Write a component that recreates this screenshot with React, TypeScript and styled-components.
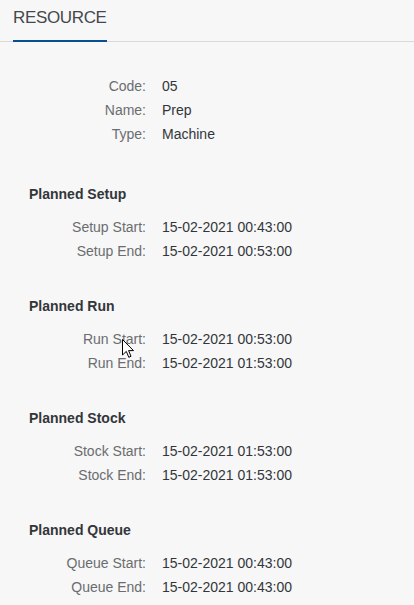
import React from "react";
import styled, { createGlobalStyle } from "styled-components";

const Global = createGlobalStyle`
  html, body { margin: 0; padding: 0; background: #f7f7f7; }
  body { font-family: "Liberation Sans", Arial, sans-serif; }
`;

const Page = styled.div`
  position: relative;
  width: 414px;
  min-height: 605px;
  background: #f7f7f7;
  overflow: hidden;
`;

const TabBar = styled.div`
  height: 41px;
  border-bottom: 1px solid #d9d9d9;
  padding-left: 13px;
  display: flex;
  align-items: flex-end;
`;

const Tab = styled.div`
  height: 41px;
  box-sizing: border-box;
  padding-top: 6px;
  font-size: 17px;
  letter-spacing: -0.35px;
  line-height: 22px;
  color: #45484c;
  border-bottom: 2px solid #0a4f92;
  margin-bottom: -1px;
  width: 94px;
  white-space: nowrap;
`;

const Content = styled.div`
  padding-top: 32px;
  display: flex;
  flex-direction: column;
`;

const Grid = styled.div`
  display: grid;
  grid-template-columns: 146px 1fr;
  column-gap: 16px;
`;

const Label = styled.div`
  text-align: right;
  font-size: 14px;
  line-height: 24px;
  color: #6a6d70;
  white-space: nowrap;
`;

const Value = styled.div`
  font-size: 14px;
  line-height: 24px;
  color: #32363a;
  white-space: nowrap;
`;

const Section = styled.section<{ $first?: boolean }>`
  margin-top: ${(p) => (p.$first ? 36 : 31)}px;
  display: flex;
  flex-direction: column;
  gap: 9px;
`;

const Heading = styled.h3`
  margin: 0;
  padding-left: 29px;
  font-size: 14px;
  line-height: 24px;
  font-weight: bold;
  color: #32363a;
`;

const Cursor = styled.svg`
  position: absolute;
  left: 122px;
  top: 339px;
  pointer-events: none;
`;

type Row = [string, string];

const info: Row[] = [
  ["Code:", "05"],
  ["Name:", "Prep"],
  ["Type:", "Machine"],
];

const sections: { title: string; rows: Row[] }[] = [
  {
    title: "Planned Setup",
    rows: [
      ["Setup Start:", "15-02-2021 00:43:00"],
      ["Setup End:", "15-02-2021 00:53:00"],
    ],
  },
  {
    title: "Planned Run",
    rows: [
      ["Run Start:", "15-02-2021 00:53:00"],
      ["Run End:", "15-02-2021 01:53:00"],
    ],
  },
  {
    title: "Planned Stock",
    rows: [
      ["Stock Start:", "15-02-2021 01:53:00"],
      ["Stock End:", "15-02-2021 01:53:00"],
    ],
  },
  {
    title: "Planned Queue",
    rows: [
      ["Queue Start:", "15-02-2021 00:43:00"],
      ["Queue End:", "15-02-2021 00:43:00"],
    ],
  },
];

const Rows = ({ rows }: { rows: Row[] }) => (
  <Grid>
    {rows.map(([l, v]) => (
      <React.Fragment key={l}>
        <Label>{l}</Label>
        <Value>{v}</Value>
      </React.Fragment>
    ))}
  </Grid>
);

export default function App() {
  return (
    <Page>
      <Global />
      <TabBar>
        <Tab>RESOURCE</Tab>
      </TabBar>
      <Content>
        <Rows rows={info} />
        {sections.map((s, i) => (
          <Section key={s.title} $first={i === 0}>
            <Heading>{s.title}</Heading>
            <Rows rows={s.rows} />
          </Section>
        ))}
      </Content>
      <Cursor width="13" height="20" viewBox="0 0 13 20">
        <path
          d="M0.5 0.5 L0.5 16 L4.3 12.4 L6.8 18.3 L9 17.3 L6.6 11.6 L11.5 11.6 Z"
          fill="#ffffff"
          stroke="#000000"
          strokeWidth="1"
          strokeLinejoin="miter"
        />
      </Cursor>
    </Page>
  );
}
